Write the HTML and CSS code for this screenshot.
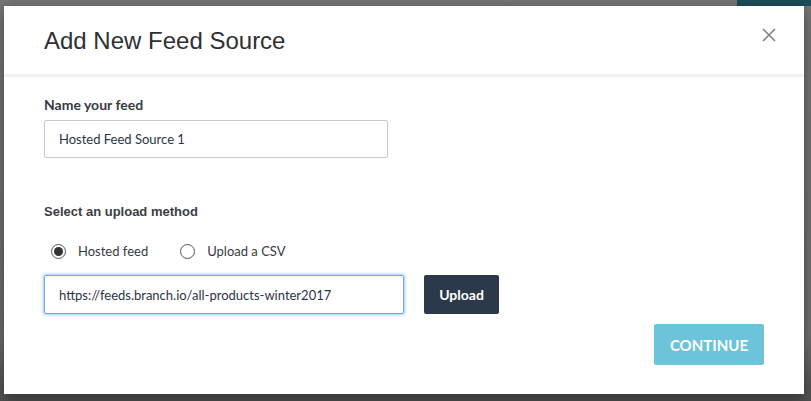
FILE: index.html
```html
<!DOCTYPE html>
<html>
<head>
<meta charset="utf-8">
<link rel="stylesheet" href="styles.css">
</head>
<body>
<div class="page">
  <div class="topbar"><span class="teal"></span></div>
  <div class="modal">
    <div class="modal-header">
      <h1 class="title">Add New Feed Source</h1>
      <button class="close" aria-label="Close">
        <svg width="14" height="14" viewBox="0 0 14 14"><path d="M1 1 L13 13 M13 1 L1 13" stroke="#808080" stroke-width="1.6" fill="none"/></svg>
      </button>
    </div>
    <div class="modal-body">
      <label class="label name-label">Name your feed</label>
      <div class="input name-input">Hosted Feed Source 1</div>
      <div class="label method-label">Select an upload method</div>
      <div class="radios">
        <div class="radio"><span class="circle checked"></span><span>Hosted feed</span></div>
        <div class="radio"><span class="circle"></span><span>Upload a CSV</span></div>
      </div>
      <div class="url-row">
        <div class="input url-input">https://feeds.branch.io/all-products-winter2017</div>
        <button class="btn-upload">Upload</button>
      </div>
      <div class="footer">
        <button class="btn-continue">CONTINUE</button>
      </div>
    </div>
  </div>
</div>
</body>
</html>
```

FILE: styles.css
```css
* { box-sizing: border-box; }
html, body { margin: 0; padding: 0; }
body {
  width: 811px;
  height: 401px;
  overflow: hidden;
  background: linear-gradient(#777777 0, #707070 340px, #505050 401px);
  font-family: "Lato", "Liberation Sans", sans-serif;
}
.page { position: relative; width: 811px; height: 401px; }
.topbar { height: 0; position: relative; }
.teal {
  position: absolute;
  left: 737px;
  top: 0;
  width: 74px;
  height: 6px;
  background: #1d4e5b;
}
.modal {
  position: absolute;
  left: 4px;
  top: 6px;
  width: 800px;
  height: 388px;
  background: #fff;
  box-shadow: 0 4px 14px rgba(0,0,0,0.45);
}
.modal-header {
  height: 71px;
  border-bottom: 3px solid #efeff4;
  display: flex;
  align-items: flex-start;
  justify-content: space-between;
  padding: 0 28px 0 40px;
}
.title {
  margin: 21px 0 0 0;
  font-family: "Liberation Sans", Arial, sans-serif;
  font-weight: normal;
  font-size: 24px;
  line-height: 28px;
  color: #2f3034;
}
.close {
  margin-top: 22px;
  background: none;
  border: 0;
  padding: 0;
  width: 14px;
  height: 14px;
  display: flex;
}
.modal-body {
  padding: 18px 40px 0 40px;
  display: flex;
  flex-direction: column;
}
.label {
  display: block;
  font-weight: bold;
  font-size: 14px;
  line-height: 20px;
  color: #353b45;
}
.name-label { margin-bottom: 5px; }
.method-label {
  margin-top: 44px;
  font-family: "Liberation Sans", Arial, sans-serif;
  font-size: 13px;
  color: #3a3d44;
}
.input {
  border: 1px solid #c9c9c9;
  border-radius: 2px;
  font-size: 13px;
  color: #2c3545;
  display: flex;
  align-items: center;
  padding-left: 14px;
}
.name-input { width: 344px; height: 38px; }
.radios {
  display: flex;
  gap: 32px;
  margin-top: 19px;
  padding-left: 7px;
  height: 20px;
  align-items: center;
}
.radio {
  display: flex;
  align-items: center;
  gap: 12px;
  font-size: 13px;
  color: #363a42;
}
.circle {
  width: 15px;
  height: 15px;
  border: 1px solid #555;
  border-radius: 50%;
  display: flex;
  align-items: center;
  justify-content: center;
}
.circle.checked::after {
  content: "";
  width: 9px;
  height: 9px;
  border-radius: 50%;
  background: #333;
}
.url-row {
  display: flex;
  align-items: flex-start;
  gap: 20px;
  margin-top: 14px;
}
.url-input {
  width: 360px;
  height: 39px;
  border: 1px solid #6ea8e8;
  box-shadow: 0 0 3px 1px rgba(102,160,233,0.6);
}
.btn-upload {
  width: 75px;
  height: 39px;
  background: #2c394b;
  color: #fff;
  border: 0;
  border-radius: 2px;
  font-family: "Lato", sans-serif;
  font-weight: bold;
  font-size: 14px;
}
.footer {
  display: flex;
  justify-content: flex-end;
  margin-top: 10px;
}
.btn-continue {
  width: 110px;
  height: 41px;
  background: #6cc4da;
  color: #fff;
  border: 0;
  border-radius: 2px;
  font-family: "Lato", sans-serif;
  font-weight: bold;
  font-size: 15px;
}
```
